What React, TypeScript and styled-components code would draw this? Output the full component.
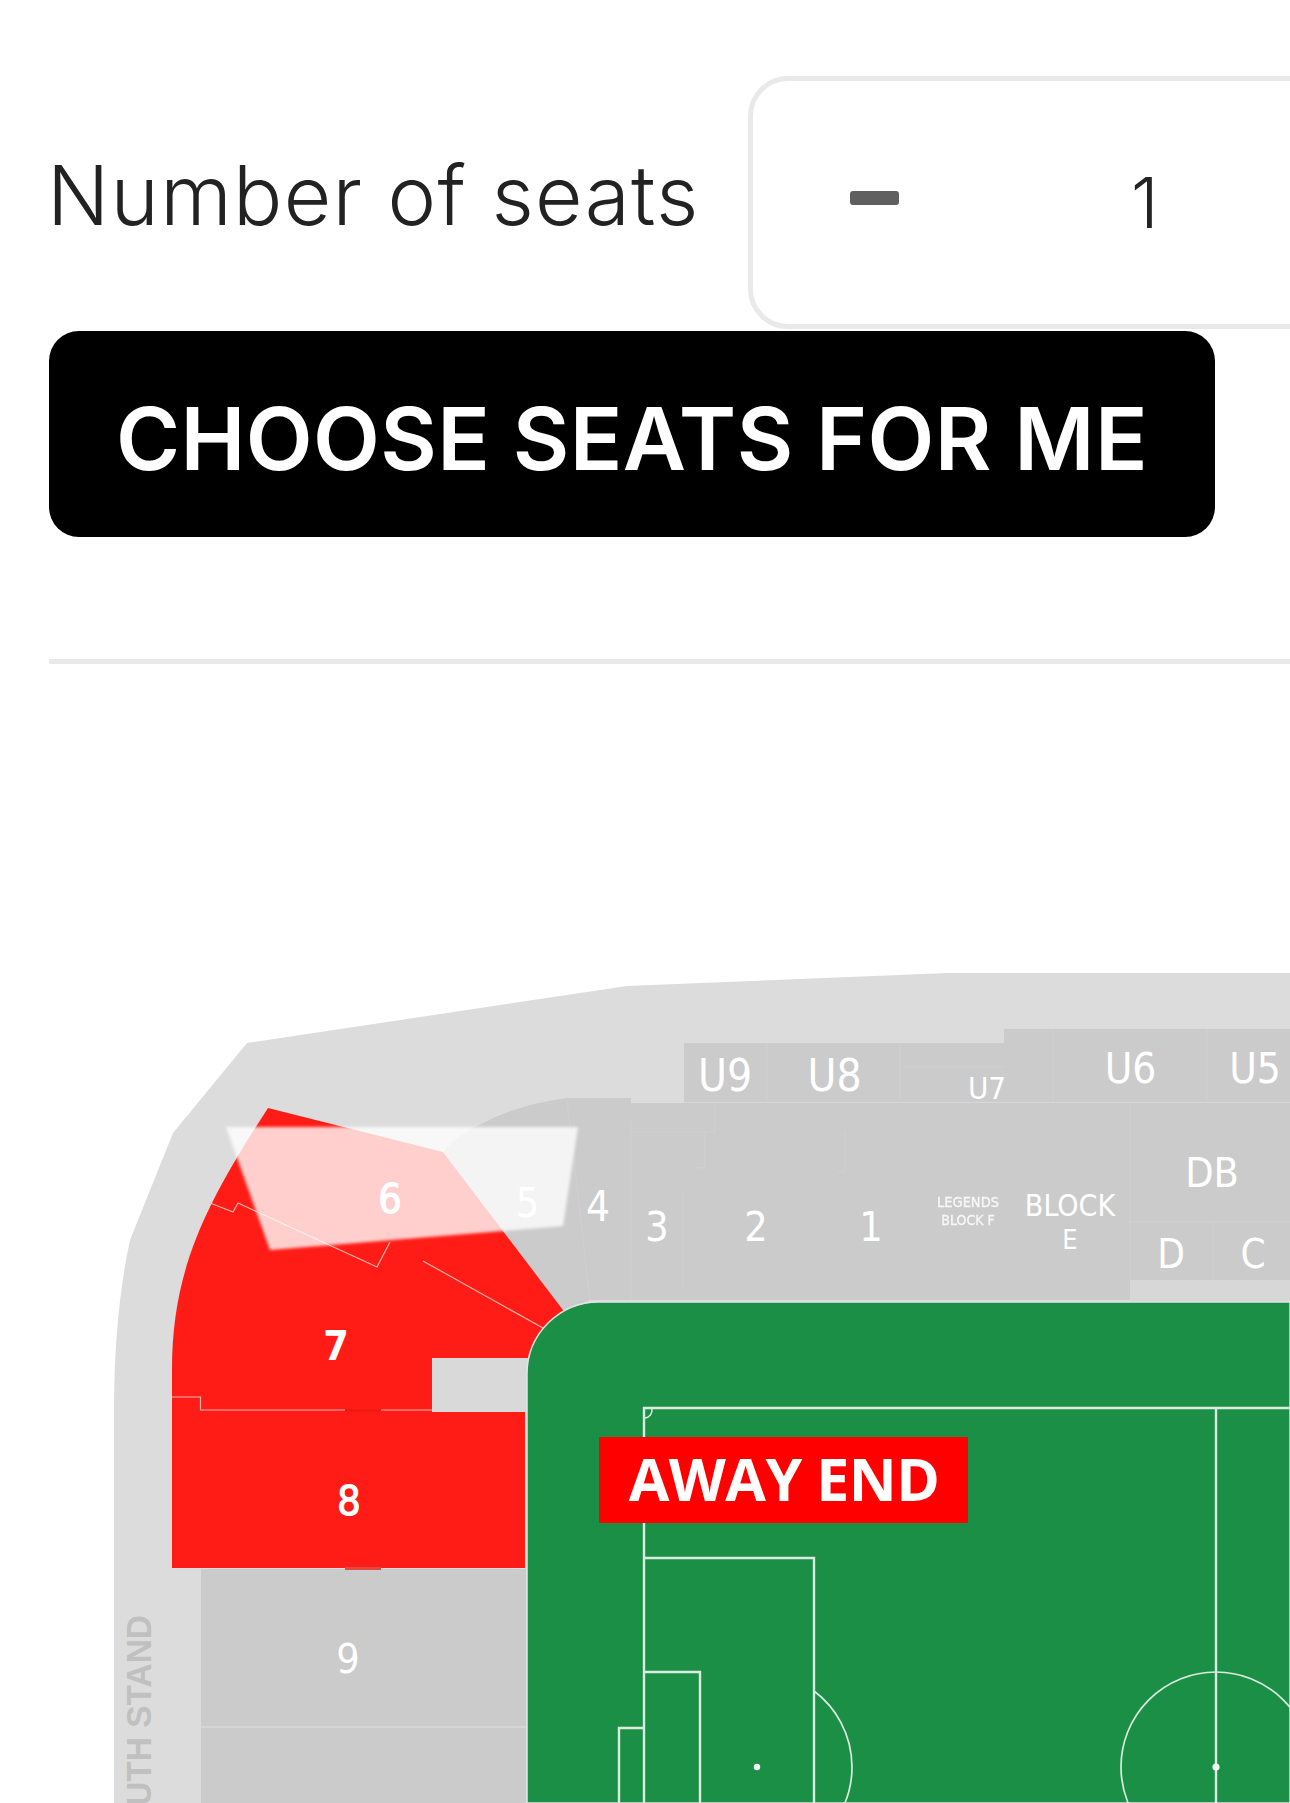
import React from "react";
import styled, { createGlobalStyle } from "styled-components";

const Global = createGlobalStyle`
  html, body { margin: 0; padding: 0; background: #fff; }
`;

const Page = styled.main`
  width: 1290px;
  height: 1803px;
  overflow: hidden;
  background: #fff;
  font-family: Inter, "Open Sans", sans-serif;
  display: flex;
  flex-direction: column;
`;

const Controls = styled.section`
  padding: 76px 0 0 49px;
  display: flex;
  flex-direction: column;
`;

const SeatRow = styled.div`
  display: flex;
  align-items: center;
  height: 253px;
`;

const SeatLabel = styled.label`
  flex: none;
  width: 701px;
  margin-left: -2px;
  font-size: 82px;
  font-weight: 350;
  letter-spacing: 1.3px;
  line-height: 1;
  color: #222;
  white-space: nowrap;
  padding-bottom: 14px;
`;

const Stepper = styled.div`
  flex: none;
  box-sizing: border-box;
  width: 760px;
  height: 253px;
  border: 5px solid #e9e9e9;
  border-radius: 40px;
  display: flex;
  align-items: center;
  padding-left: 97px;
  gap: 232px;
`;

const Minus = styled.span`
  display: block;
  width: 49px;
  height: 14px;
  border-radius: 3px;
  background: #5f5f5f;
  margin-bottom: 10px;
`;

const Count = styled.span`
  font-size: 70px;
  font-weight: 300;
  line-height: 1;
  color: #222;
`;

const PrimaryButton = styled.button`
  margin-top: 2px;
  width: 1166px;
  height: 206px;
  border: 0;
  border-radius: 30px;
  background: #000;
  color: #fff;
  font-family: Inter, "Open Sans", sans-serif;
  font-size: 87px;
  font-weight: 600;
  letter-spacing: 0.4px;
  white-space: nowrap;
  padding: 8px 0 0;
`;

const Divider = styled.hr`
  margin: 122px 0 0 49px;
  border: 0;
  height: 5px;
  background: #e9e9e9;
`;

const MapSvg = styled.svg`
  display: block;
  margin-top: 36px;
  flex: none;
`;

const SECTION_FONT = `"DejaVu Sans", sans-serif`;

type LabelProps = { x: number; y: number; size: number; weight?: number; op?: number; thick?: number; children: string };
const L = ({ x, y, size, weight = 400, op = 1, thick = 0, children }: LabelProps) => (
  <text
    x={x}
    y={y}
    fontSize={size}
    fontWeight={weight}
    fill="#fff"
    stroke={thick ? "#fff" : "none"}
    strokeWidth={thick}
    opacity={op}
    textAnchor="middle"
    fontFamily={SECTION_FONT}
    style={{ fontStretch: "condensed" }}
  >
    {children}
  </text>
);

const seamLines = [
  "M767 1043V1102", "M900 1043V1102", "M1053 1029V1102", "M1207 1029V1102", "M901 1067H1004",
  "M1130 1103V1280", "M1130 1222H1290", "M1213 1222V1280", "M631 1120V1300", "M683 1290V1190",
  "M715 1103V1132", "M705 1132V1168H693", "M845 1132V1172H838", "M567 1100L590 1300",
  "M684 1102H1290", "M631 1132H715",
];

function StadiumMap() {
  return (
    <MapSvg width={1290} height={1103} viewBox="0 700 1290 1103">
      <defs>
        <filter id="soft" x="-5%" y="-5%" width="110%" height="110%">
          <feGaussianBlur stdDeviation="1.6" />
        </filter>
        <filter id="edge" x="-2%" y="-2%" width="104%" height="104%">
          <feGaussianBlur stdDeviation="0.5" />
        </filter>
      </defs>

      {/* concourse */}
      <path
        d="M114 1803V1400Q115 1310 130 1240L173 1133L247 1043L627 986L948 973H1290V1803Z"
        fill="#dcdcdc"
      />

      {/* upper tier */}
      <path d="M684 1043H1004V1029H1290V1102H684Z" fill="#cbcbcb" />

      {/* lower tier, behind the goal and along the side */}
      <path
        d="M443 1152Q458 1134 483 1123Q520 1104 567 1098H631V1103H1130V1300H590L562 1312Z"
        fill="#cbcbcb"
      />
      <path d="M1130 1103H1290V1280H1130Z" fill="#cbcbcb" />
      <path d="M1130 1280H1290V1302H1130Z" fill="#d7d7d7" />

      <g stroke="#d0d0d0" strokeWidth="1" fill="none">
        {seamLines.map((d) => (
          <path key={d} d={d} />
        ))}
      </g>

      {/* south stand lower */}
      <rect x="201" y="1569" width="325" height="234" fill="#cbcbcb" />
      <path d="M201 1727H526" stroke="#d8d8d8" strokeWidth="1.5" />

      {/* gap beside block 7 */}
      <rect x="432" y="1358" width="100" height="54" fill="#d9d9d9" />

      {/* away blocks */}
      <path
        d="M268 1108L443 1152L566 1314L528 1358H432V1412H525V1568H172V1370C172 1270 205 1205 268 1108Z"
        fill="#ff1f14"
        filter="url(#edge)"
      />
      <g fill="none" stroke="#ffb4ae" strokeWidth="1.2">
        <path d="M210 1203L233 1212L238 1203L377 1267L390 1242" />
        <path d="M423 1261L543 1328" />
        <path d="M172 1397H200.5V1410H345" />
        <path d="M381 1410H432" />
      </g>
      <rect x="345" y="1409" width="36" height="3" fill="#f01a10" />
      <rect x="345" y="1567" width="36" height="3" fill="#dd4a40" />

      {/* pitch */}
      <path
        d="M527 1803V1374A72 72 0 0 1 599 1302H1290V1803Z"
        fill="#1c8f47"
        stroke="#e4e4e4"
        strokeWidth="1.5"
      />
      <g fill="none" stroke="#d9ece0" strokeWidth="2.4">
        <path d="M1290 1408H644V1803" />
        <path d="M644 1558H814V1803" />
        <path d="M644 1672H700V1803" />
        <path d="M644 1728H619V1803" />
        <path d="M1216 1408V1803" />
        <path d="M652 1409A8 8 0 0 1 645 1418" strokeWidth="1.5" />
      </g>
      <g fill="none" stroke="#d9ece0" strokeWidth="1.7">
        <path d="M814 1691A95 95 0 0 1 814 1843" />
        <circle cx="1216" cy="1767" r="95" />
      </g>
      <circle cx="757" cy="1767" r="3.2" fill="#f2f8f4" />
      <circle cx="1216" cy="1767" r="3.6" fill="#f2f8f4" />

      {/* away banner */}
      <rect x="599" y="1437" width="369" height="86" fill="#ff0000" />
      <text
        x="784"
        y="1501"
        fontSize="59"
        fontWeight="700"
        fill="#fff"
        textAnchor="middle"
        fontFamily={`"Open Sans", sans-serif`}
        letterSpacing="-0.6"
      >
        AWAY END
      </text>

      {/* section labels */}
      <L x={725} y={1091} size={44}>U9</L>
      <L x={834.5} y={1091} size={44}>U8</L>
      <L x={987} y={1099} size={31}>U7</L>
      <L x={1130.5} y={1083} size={42}>U6</L>
      <L x={1255} y={1083} size={42}>U5</L>
      <L x={1212} y={1187} size={41}>DB</L>
      <L x={1171} y={1268} size={40}>D</L>
      <L x={1253} y={1268} size={40}>C</L>
      <L x={1070} y={1216} size={30}>BLOCK</L>
      <L x={1070} y={1249} size={27}>E</L>
      <L x={968} y={1207} size={14.5} op={0.85} thick={0.3}>LEGENDS</L>
      <L x={968} y={1225} size={14} op={0.85} thick={0.3}>BLOCK F</L>
      <L x={871} y={1241} size={41}>1</L>
      <L x={756} y={1241} size={41}>2</L>
      <L x={657} y={1241} size={41}>3</L>
      <L x={598} y={1221} size={42}>4</L>
      <L x={349} y={1515} size={41} thick={1.2}>8</L>
      <L x={348} y={1673} size={41}>9</L>
      <L x={336} y={1360} size={41} weight={700}>7</L>

      <text
        transform="translate(151 1615) rotate(-90) scale(0.93 1)"
        fontSize="36"
        fontWeight="700"
        fill="#c0c0c0"
        textAnchor="end"
        fontFamily={`"Liberation Sans", sans-serif`}
      >
        SOUTH STAND
      </text>

      {/* faded watermark across the corner */}
      <path
        d="M226 1127H578L563 1226L270 1250Z"
        fill="#fff"
        fillOpacity="0.79"
        filter="url(#soft)"
      />
      <L x={390} y={1213} size={41} thick={1.2}>6</L>
      <L x={527.5} y={1217} size={41}>5</L>
    </MapSvg>
  );
}

export default function App() {
  return (
    <Page>
      <Global />
      <Controls>
        <SeatRow>
          <SeatLabel>Number of seats</SeatLabel>
          <Stepper>
            <Minus />
            <Count>1</Count>
          </Stepper>
        </SeatRow>
        <PrimaryButton>CHOOSE SEATS FOR ME</PrimaryButton>
      </Controls>
      <Divider />
      <StadiumMap />
    </Page>
  );
}
